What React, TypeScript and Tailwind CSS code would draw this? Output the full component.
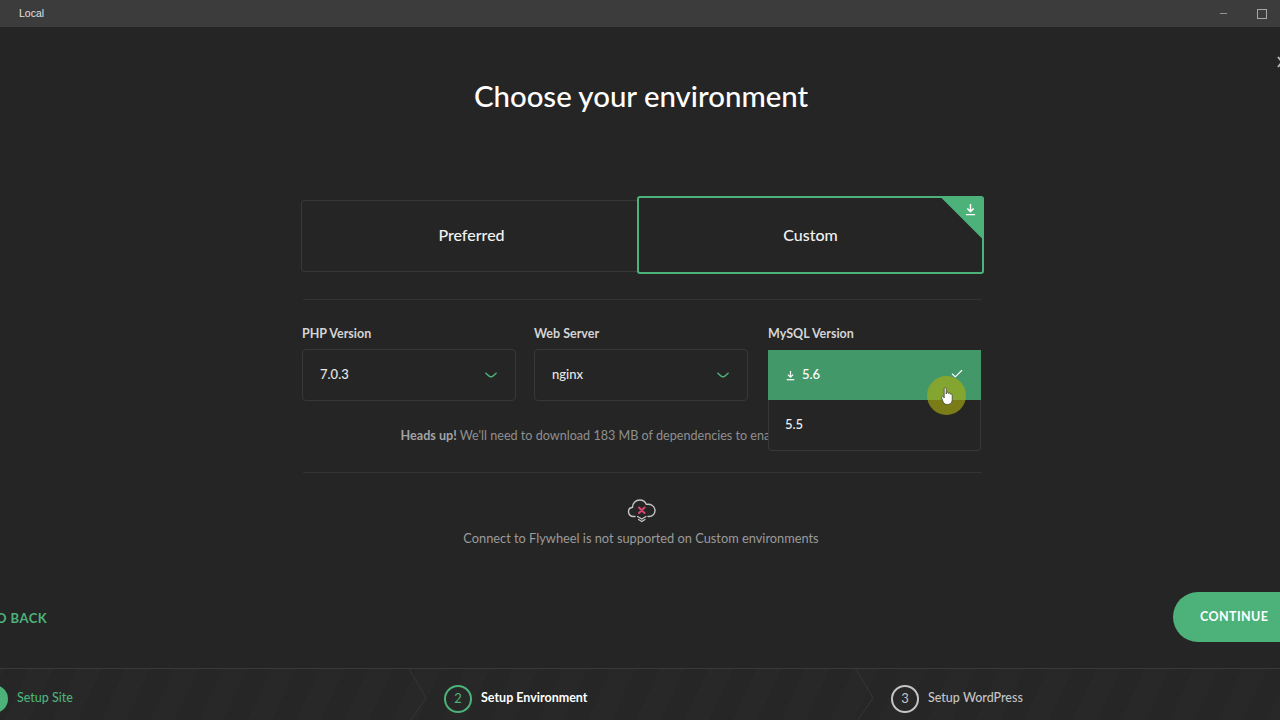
import React from 'react';
import { Check, Minus } from 'lucide-react';

function DownloadGlyph({ className }: { className: string }) {
  return (
    <svg viewBox="0 0 12 14" fill="none" stroke="currentColor" strokeWidth="1.6" className={className}>
      <path d="M6 1 V9 M2.5 5.8 L6 9.3 L9.5 5.8" />
      <path d="M1 12.6 H11" />
    </svg>
  );
}

function Field({ label, value, className }: { label: string; value: string; className: string }) {
  return (
    <div className={className}>
      <div className="pt-px text-[12.5px] leading-[16px] font-bold text-[#d4d4d4]">{label}</div>
      <div className="mt-[7px] h-[52px] flex items-center justify-between pl-[17px] pr-[18px] border border-[#383838] rounded-[4px]">
        <span className="text-[13px] font-medium text-[#e8e8e8]">{value}</span>
        <svg width="12" height="6" viewBox="0 0 13 6" fill="none">
          <path d="M1 1 C4 4 5 5 6.5 5 C8 5 9 4 12 1" stroke="#4dac78" strokeWidth="1.6" strokeLinecap="round" />
        </svg>
      </div>
    </div>
  );
}

function Chevron() {
  return (
    <svg width="19" height="60" viewBox="0 0 19 60" fill="none" className="shrink-0 self-start">
      <path d="M1 0 L18 29 L2 52" stroke="#363636" strokeWidth="1" />
    </svg>
  );
}

export default function App() {
  return (
    <div className="relative w-[1280px] h-[720px] overflow-hidden flex flex-col bg-[#252525] font-['Lato','Liberation_Sans',sans-serif]">
      {/* title bar */}
      <div className="h-[27px] shrink-0 bg-[#3c3c3c] flex items-center justify-between pl-[19px] pr-[13px]">
        <span className="text-[10.5px] text-[#e0e0e0] font-['Liberation_Sans',sans-serif]">Local</span>
        <div className="flex items-center gap-[28px] text-[#bdbdbd]">
          <Minus size={11} strokeWidth={1.5} />
          <div className="w-[10px] h-[10px] border border-[#a8a8a8]" />
        </div>
      </div>

      <svg width="10" height="12" viewBox="0 0 10 12" className="absolute top-[56px] left-[1277px] text-[#b8b8b8]">
        <path d="M1 1 L9 11 M9 1 L1 11" stroke="currentColor" strokeWidth="2" />
      </svg>

      <div className="flex-1 flex flex-col items-center pl-[2px]">
        <h1 className="mt-[49px] text-[29.4px] leading-[40px] font-medium text-white">Choose your environment</h1>

        {/* environment tabs */}
        <div className="mt-[80px] ml-[2px] w-[683px] flex items-center">
          <div className="mt-px w-[336px] h-[72px] pl-[5px] pb-[2px] flex items-center justify-center border border-[#383838] border-r-0 rounded-l-[4px] text-[16px] font-medium text-[#f2f2f2]">
            Preferred
          </div>
          <div className="relative w-[347px] h-[78px] pl-px flex items-center justify-center border-2 border-[#4cb27a] rounded-[3px] text-[16px] font-medium text-[#f2f2f2] overflow-hidden">
            Custom
            <div className="absolute -top-[2px] -right-[2px] w-[44px] h-[44px] bg-[#4cb27a] [clip-path:polygon(0_0,100%_0,100%_100%)]" />
            <DownloadGlyph className="absolute top-[5px] right-[6px] w-[11px] h-[13px] text-white" />
          </div>
        </div>

        <div className="mt-[25px] ml-[2px] w-[679px] border-t border-[#333333]" />

        {/* version selects */}
        <div className="mt-[25px] ml-[2px] w-[680px] flex items-start">
          <Field label="PHP Version" value="7.0.3" className="w-[214px]" />
          <Field label="Web Server" value="nginx" className="ml-[18px] w-[214px]" />
          <div className="relative ml-[20px] w-[213px]">
            <div className="pt-px text-[12.5px] leading-[16px] font-bold text-[#d4d4d4]">MySQL Version</div>
            <div className="absolute z-10 top-[25px] left-0 w-full bg-[#252525] border-x border-b border-[#383838] rounded-b-[4px]">
              <div className="h-[50px] -mx-px flex items-center justify-between pl-[18px] pr-[17px] bg-[#43986a] text-white">
                <span className="flex items-center gap-[7px] text-[13px] font-medium">
                  <DownloadGlyph className="w-[9px] h-[11px]" />
                  5.6
                </span>
                <Check size={14} strokeWidth={2} className="-mt-[3px]" />
              </div>
              <div className="h-[50px] flex items-center pl-[16px] text-[13px] font-medium text-[#f0f0f0]">5.5</div>
            </div>
          </div>
        </div>

        <p className="mt-[27px] pl-[5px] text-[12.6px] leading-[16px] text-[#8f8f8f] whitespace-nowrap">
          <span className="font-bold text-[#a3a3a3]">Heads up!</span> We'll need to download 183 MB of dependencies to enable this environment.
        </p>

        <div className="mt-[28px] ml-[2px] w-[679px] border-t border-[#333333]" />

        <svg width="30" height="26" viewBox="0 0 30 26" fill="none" className="mt-[24px] ml-[2px]">
          <path
            d="M8 19.5 H6.5 C3.5 19.5 1.5 17.4 1.5 14.8 C1.5 12.4 3.2 10.6 5.5 10.3 C5.6 6.2 8.8 3 12.8 3 C15.8 3 18.3 4.8 19.4 7.4 C23.8 6.6 28 9.2 28 13.4 C28 16.7 25.6 19.5 22 19.5 H21"
            stroke="#c4c4c4"
            strokeWidth="1.4"
            strokeLinecap="round"
          />
          <path d="M12 10.5 L17.5 16 M17.5 10.5 L12 16" stroke="#d9466f" strokeWidth="2" strokeLinecap="round" />
          <path d="M10.5 19.5 L14.8 22 L19 19.5 M11.5 22.5 L14.8 24.5 L18 22.5" stroke="#c4c4c4" strokeWidth="1.2" strokeLinecap="round" />
        </svg>
        <p className="mt-[7px] text-[12.8px] leading-[16px] text-[#9b9b9b] whitespace-nowrap">
          Connect to Flywheel is not supported on Custom environments
        </p>
      </div>

      {/* back / continue */}
      <div className="shrink-0 h-[50px] mb-[26px] -ml-[14px] -mr-[30px] flex items-center justify-between">
        <span className="text-[13px] font-bold tracking-[0.5px] text-[#4cb27a] mt-[4px]">GO BACK</span>
        <div className="h-[50px] w-[137px] pl-[27px] flex items-center rounded-full bg-[#4cb27a] text-[12.5px] font-bold tracking-[0.4px] text-white">
          CONTINUE
        </div>
      </div>

      {/* steps */}
      <div className="shrink-0 h-[60px] -mb-[8px] -ml-[20px] flex border-t border-[#3a3a3a] bg-[#272727] bg-[repeating-linear-gradient(115deg,#282828_0px,#282828_22px,#262626_22px,#262626_44px)]">
        <div className="w-[464px] shrink-0 flex items-center justify-between pr-[17px]">
          <div className="flex items-center gap-[9px]">
            <div className="w-[28px] h-[28px] rounded-full bg-[#4cb27a]" />
            <span className="text-[12.5px] font-medium text-[#4cb27a]">Setup Site</span>
          </div>
          <Chevron />
        </div>
        <div className="w-[447px] shrink-0 flex items-center justify-between pr-[17px]">
          <div className="flex items-center gap-[9px]">
            <div className="w-[28px] h-[28px] rounded-full border-2 border-[#4cb27a] flex items-center justify-center text-[13px] text-[#4cb27a]">2</div>
            <span className="text-[12.5px] font-bold text-white">Setup Environment</span>
          </div>
          <Chevron />
        </div>
        <div className="flex items-center gap-[9px]">
          <div className="w-[28px] h-[28px] rounded-full border-2 border-[#c4c4c4] flex items-center justify-center text-[13px] text-[#c4c4c4]">3</div>
          <span className="text-[12.5px] font-medium text-[#c4c4c4]">Setup WordPress</span>
        </div>
      </div>

      {/* recorded mouse pointer */}
      <div className="absolute z-20 left-[927px] top-[376px] w-[39px] h-[39px] rounded-full bg-[#a8ac10]/65 flex items-center justify-center">
        <svg width="12" height="18" viewBox="0 0 12 18" className="mt-[1px]">
          <path
            d="M3.2 1.6 C3.2 0.4 5.2 0.4 5.2 1.6 V7 L5.6 5.8 C6 5 7.4 5.2 7.4 6.4 L7.6 6.4 C8 5.8 9.4 6 9.4 7.2 C9.8 6.8 11.2 7 11.2 8.2 V12.5 C11.2 15 9.8 17.4 7.4 17.4 H5.6 C3.8 17.4 3 16.2 2 14.6 L0.6 10.6 C0.2 9.4 1.6 8.8 2.4 9.8 L3.2 11 Z"
            fill="#ffffff"
            stroke="#333333"
            strokeWidth="0.7"
          />
        </svg>
      </div>
    </div>
  );
}
